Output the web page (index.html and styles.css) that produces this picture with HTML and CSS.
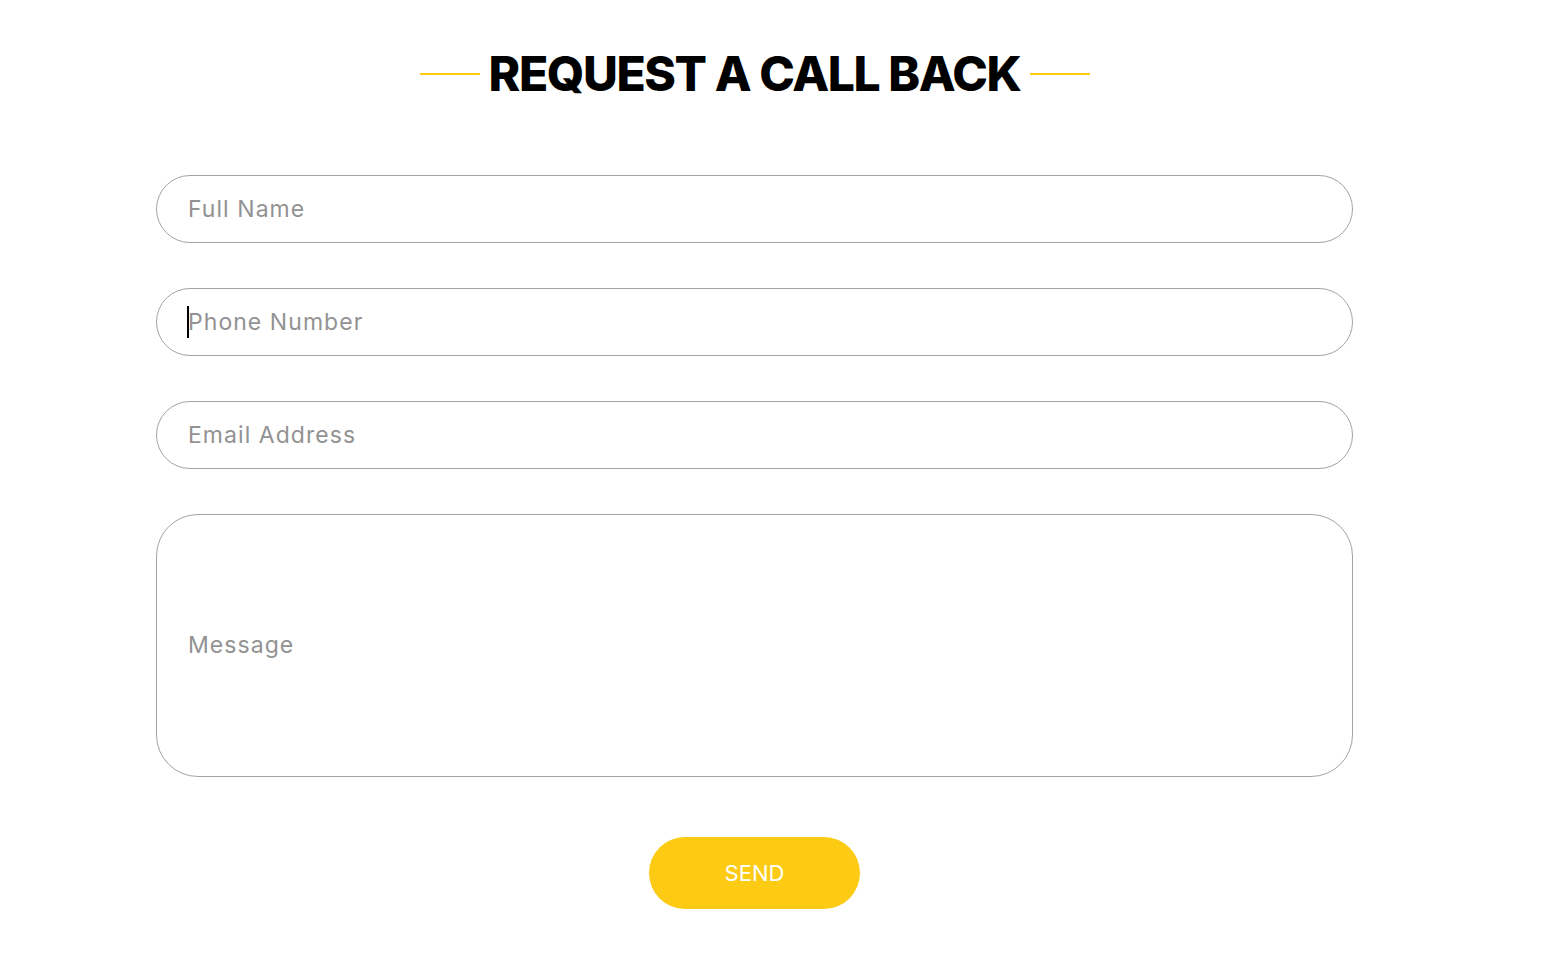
FILE: index.html
```html
<!DOCTYPE html>
<html lang="en">
<head>
<meta charset="utf-8">
<title>Request a Call Back</title>
<link rel="stylesheet" href="styles.css">
</head>
<body>
<section class="callback">
  <div class="heading">
    <span class="rule"></span>
    <h2 class="title">REQUEST A CALL BACK</h2>
    <span class="rule"></span>
  </div>
  <form class="form">
    <input class="field" type="text" placeholder="Full Name">
    <div class="field-wrap">
      <input class="field" type="tel" placeholder="Phone Number">
      <span class="caret"></span>
    </div>
    <input class="field" type="email" placeholder="Email Address">
    <textarea class="field message" placeholder="Message"></textarea>
    <div class="actions">
      <button class="send" type="button">SEND</button>
    </div>
  </form>
</section>
</body>
</html>
```
FILE: styles.css
```css
* { box-sizing: border-box; }
html, body { margin: 0; padding: 0; background: #fff; }
body { font-family: "Inter", "Liberation Sans", sans-serif; }

.callback {
  width: 1197px;
  margin-left: 156px;
  padding-top: 48px;
}

.heading {
  display: flex;
  align-items: center;
  justify-content: center;
  gap: 9px;
  height: 52px;
}
.rule {
  display: block;
  width: 60px;
  height: 2px;
  background: #fcc915;
}
.title {
  margin: 0;
  font-size: 48px;
  line-height: 52px;
  font-weight: 800;
  color: #000;
  letter-spacing: -1.4px;
}

.form {
  margin-top: 75px;
  display: flex;
  flex-direction: column;
  gap: 45px;
}
.field-wrap { position: relative; }
.field {
  display: block;
  width: 100%;
  height: 68px;
  border: 1px solid #a3a3a3;
  border-radius: 34px;
  padding: 0 31px;
  font-family: "Inter", "Liberation Sans", sans-serif;
  font-size: 23px;
  color: #333;
  background: #fff;
  outline: none;
}
.field::placeholder { color: #929292; letter-spacing: 1.05px; }
.caret {
  position: absolute;
  left: 31px;
  top: 18px;
  width: 2px;
  height: 32px;
  background: #000;
}
.message {
  height: 263px;
  border-radius: 42px;
  padding: 115px 31px 0;
  line-height: 30px;
  resize: none;
}
.actions {
  display: flex;
  justify-content: center;
  margin-top: 15px;
}
.send {
  width: 211px;
  height: 72px;
  border: none;
  border-radius: 36px;
  background: #fdca14;
  color: #fff;
  font-family: "Inter", "Liberation Sans", sans-serif;
  font-size: 22px;
  font-weight: 400;
  cursor: pointer;
}
```
